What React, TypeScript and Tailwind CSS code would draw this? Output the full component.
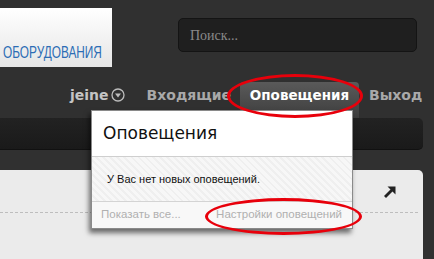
import React from "react"

function CircleDown() {
  return (
    <svg width="14" height="14" viewBox="0 0 14 14" className="ml-[2px]">
      <circle cx="7" cy="7" r="6" fill="none" stroke="#bdbdbd" strokeWidth="1.3" />
      <path d="M4 5.5 L10 5.5 L7 9.5 Z" fill="#bdbdbd" />
    </svg>
  )
}

function Arrow() {
  return (
    <svg width="14" height="14" viewBox="0 0 14 14">
      <path d="M2 12 L9 5" stroke="#222" strokeWidth="2.8" />
      <path d="M4.5 1.5 L12.5 1.5 L12.5 9.5 Z" fill="#222" />
    </svg>
  )
}

export default function App() {
  return (
    <div className="relative w-[434px] h-[259px] overflow-hidden bg-[#303030] font-['DejaVu_Sans',sans-serif]">
      {/* header */}
      <div className="flex h-[75px] items-start">
        <div className="mt-[8px] w-[112px] h-[59px] bg-gradient-to-b from-white to-[#e6e6e6] flex items-end pb-[6px] pl-[3px]">
          <span className="font-['Liberation_Sans',sans-serif] text-[16px] leading-none text-[#2c6db5] origin-left scale-x-[0.74] inline-block whitespace-nowrap">
            ОБОРУДОВАНИЯ
          </span>
        </div>
        <div className="ml-[66px] mt-[18px] w-[239px] h-[34px] rounded-[5px] bg-[#1f1f1f] border border-[#141414] flex items-center pl-[11px]">
          <span className="font-['Liberation_Serif',serif] text-[14px] text-[#8a8a8a]">Поиск...</span>
        </div>
      </div>

      {/* nav */}
      <div className="flex items-start h-[43px] pl-[70px] font-bold text-[14px] leading-none">
        <div className="flex items-center mt-[13px] text-[#c4c4c4]">
          jeine
          <CircleDown />
        </div>
        <div className="ml-[22px] mt-[13px] text-[#a9a9a9]">Входящие</div>
        <div className="ml-[9px] mt-[7px] w-[119px] h-[36px] rounded-t-[4px] bg-gradient-to-b from-[#5a5a5a] to-[#3e3e3e] text-white pt-[7px] text-center text-[13.5px]">
          Оповещения
        </div>
        <div className="ml-[10px] mt-[13px] text-[#a9a9a9]">Выход</div>
      </div>

      {/* dark strip */}
      <div className="h-[32px] w-[423px] rounded-r-[5px] bg-gradient-to-b from-[#222] to-[#1a1a1a] border-b border-[#111]" />
      <div className="h-[20px]" />

      {/* content panel */}
      <div className="relative h-[89px] w-[423px] rounded-tr-[5px] bg-[#ebebeb]">
        <div className="flex justify-end pr-[26px] pt-[15px]">
          <Arrow />
        </div>
        <div className="mt-[13px] mr-[5px] border-t border-dashed border-[#bdbdbd]" />
      </div>

      {/* popup */}
      <div className="absolute left-[91px] top-[110px] w-[262px] h-[119px] bg-white border border-[#8a8a8a] shadow-[-2px_4px_5px_rgba(0,0,0,0.55)] flex flex-col">
        <div className="h-[46px] flex items-center pl-[11px] text-[17px] text-[#111] border-b border-[#cfcfcf]">
          Оповещения
        </div>
        <div className="h-[45px] flex items-center pl-[15px] text-[11px] text-[#111] font-['Liberation_Sans',sans-serif] bg-[repeating-linear-gradient(45deg,#f7f7f7_0px,#f7f7f7_3px,#efefef_3px,#efefef_5px)] border-b border-[#d4d4d4]">
          У Вас нет новых оповещений.
        </div>
        <div className="flex-1 flex items-center justify-between pl-[9px] pr-[10px] text-[11.5px] text-[#b0b0b0] font-['Liberation_Sans',sans-serif] bg-[#f8f8f8]">
          <span>Показать все...</span>
          <span>Настройки оповещений</span>
        </div>
      </div>

      {/* red ellipses */}
      <div className="absolute left-[227px] top-[74px] w-[136px] h-[44px] rounded-[50%] border-[3px] border-[#e8000b]" />
      <div className="absolute left-[205px] top-[198px] w-[157px] h-[37px] rounded-[50%] border-[3px] border-[#e8000b]" />
    </div>
  )
}
